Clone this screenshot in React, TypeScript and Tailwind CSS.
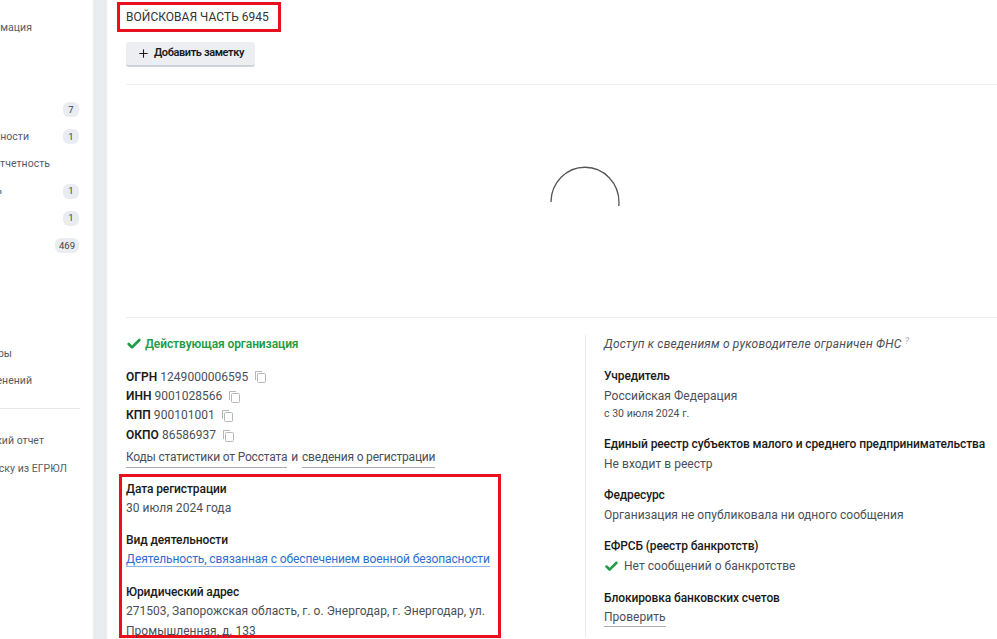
import { Plus, Check } from 'lucide-react';

function SideRow({ text, end, badge }: { text?: string; end?: string; badge?: string }) {
  return (
    <div className="relative flex h-[27.2px] items-center justify-end overflow-hidden text-[10.5px] text-[#555b66]">
      {text && <span className={`whitespace-nowrap ${end}`}>{text}</span>}
      {badge && (
        <span className="absolute right-[14px] top-[6px] flex h-[15px] min-w-[16px] items-center justify-center rounded-[6px] bg-[#e9ecf1] px-[4px] text-[9.5px] text-[#444]">
          {badge}
        </span>
      )}
    </div>
  );
}

function CopyIcon() {
  return (
    <svg width="11" height="12" viewBox="0 0 11 12" fill="none" stroke="#b4b7bb" className="ml-[7px] inline-block align-middle">
      <path d="M.5 9V.5H7" />
      <rect x="2.5" y="2.5" width="8" height="9" rx="1" />
    </svg>
  );
}

function CodeRow({ label, value }: { label: string; value: string }) {
  return (
    <div className="h-[19.4px] leading-[19.4px]">
      <b className="font-semibold text-[#1a1a1a]">{label}</b> {value}
      <CopyIcon />
    </div>
  );
}

function Field({ title, children, className }: { title: string; children: React.ReactNode; className?: string }) {
  return (
    <div className={className}>
      <div className="whitespace-nowrap font-medium leading-[19.5px] tracking-[-0.1px] text-[#1a1a1a]">{title}</div>
      <div className="leading-[19.5px]">{children}</div>
    </div>
  );
}

export default function App() {
  return (
    <div className="flex h-[639px] w-[997px] overflow-hidden bg-white font-['Roboto',sans-serif] text-[12px] tracking-[0.03px] text-[#4a4f57]">
      <aside className="w-[93px] shrink-0 overflow-hidden pt-[14px]">
        <SideRow text="омация" end="pr-[61px]" />
        <div className="h-[55px]" />
        <SideRow badge="7" />
        <SideRow text="ности" end="pr-[64px]" badge="1" />
        <SideRow text="отчетность" end="pr-[43px]" />
        <SideRow text="ь" end="pr-[91px]" badge="1" />
        <SideRow badge="1" />
        <SideRow badge="469" />
        <div className="h-[81px]" />
        <SideRow text="ры" end="pr-[81px]" />
        <SideRow text="енений" end="pr-[61px]" />
        <div className="mr-[13px] mt-[13px] h-px bg-[#e6e8ec]" />
        <div className="h-[19px]" />
        <SideRow text="кий отчет" end="pr-[49px]" />
        <SideRow text="ску из ЕГРЮЛ" end="pr-[26px]" />
      </aside>
      <div className="w-[14px] shrink-0 bg-[#e9ecf1]" />
      <main className="min-w-0 flex-1 pl-[19px]">
        <div className="-ml-[9px] mt-[2px] flex h-[30px] w-[164px] items-center whitespace-nowrap border-[3px] border-[#e8101f] pl-[6px] text-[#333]">
          ВОЙСКОВАЯ ЧАСТЬ 6945
        </div>
        <button className="mt-[10px] flex h-[25px] w-[129px] items-center justify-center gap-[4px] rounded-[3px] border-b-2 border-[#cfd4dc] bg-[#eceef2] text-[11px] font-semibold tracking-[-0.4px] text-[#1a1a1a]">
          <Plus size={13} strokeWidth={2} />
          Добавить заметку
        </button>
        <div className="mt-[17px] h-px bg-[#f0f0f0]" />
        <div className="h-[232px]">
          <svg width="72" height="46" viewBox="0 0 72 46" fill="none" className="ml-[423px] translate-y-[80px]">
            <path d="M2 37A34 35 0 0 1 70 37.500 L69.800 41" stroke="#555" strokeWidth="1.300" />
          </svg>
        </div>
        <div className="h-px bg-[#ececec]" />
        <div className="flex">
          <section className="w-[459px] shrink-0">
            <div className="mt-[17px] flex h-[18px] items-center gap-[3px] font-semibold tracking-[-0.1px] text-[#1f9d45]">
              <Check size={16} strokeWidth={4} />
              Действующая организация
            </div>
            <div className="mt-[14.500px]">
              <CodeRow label="ОГРН" value="1249000006595" />
              <CodeRow label="ИНН" value="9001028566" />
              <CodeRow label="КПП" value="900101001" />
              <CodeRow label="ОКПО" value="86586937" />
            </div>
            <div className="mt-[3px] flex gap-[4px] leading-[19px] tracking-[-0.2px]">
              <span className="border-b border-[#a9adb3]">Коды статистики от Росстата</span>
              <span>и</span>
              <span className="border-b border-[#a9adb3]">сведения о регистрации</span>
            </div>
            <div className="-ml-[7px] mt-[5.500px] h-[164px] w-[382px] border-[3px] border-[#e8101f] pl-[4px] pr-[4px] pt-[3px]">
              <Field title="Дата регистрации">30 июля 2024 года</Field>
              <Field title="Вид деятельности" className="mt-[12px]">
                <span className="whitespace-nowrap border-b border-[#8fb4ec] tracking-[-0.1px] text-[#2b6fd0]">Деятельность, связанная с обеспечением военной безопасности</span>
              </Field>
              <Field title="Юридический адрес" className="mt-[13px]">
                271503, Запорожская область, г. о. Энергодар, г. Энергодар, ул. Промышленная, д. 133
              </Field>
            </div>
          </section>
          <section className="mt-[17px] flex-1 border-l border-[#ececec] pl-[18px]">
            <div className="h-[18px] italic leading-[18px] tracking-[0.2px]">
              Доступ к сведениям о руководителе ограничен ФНС <sup className="text-[9px] text-[#aaa]">?</sup>
            </div>
            <Field title="Учредитель" className="mt-[14px]">Российская Федерация</Field>
            <div className="text-[10.5px] leading-[15px]">с 30 июля 2024 г.</div>
            <Field title="Единый реестр субъектов малого и среднего предпринимательства" className="mt-[14px]">Не входит в реестр</Field>
            <Field title="Федресурс" className="mt-[12px]">Организация не опубликовала ни одного сообщения</Field>
            <Field title="ЕФРСБ (реестр банкротств)" className="mt-[12px]">
              <span className="flex items-center gap-[5px]">
                <Check size={15} strokeWidth={4} className="text-[#1f9d45]" />
                Нет сообщений о банкротстве
              </span>
            </Field>
            <Field title="Блокировка банковских счетов" className="mt-[13px]">
              <span className="-mt-[1px] block w-fit border-b border-[#a9adb3] leading-[18.5px]">Проверить</span>
            </Field>
          </section>
        </div>
      </main>
    </div>
  );
}
